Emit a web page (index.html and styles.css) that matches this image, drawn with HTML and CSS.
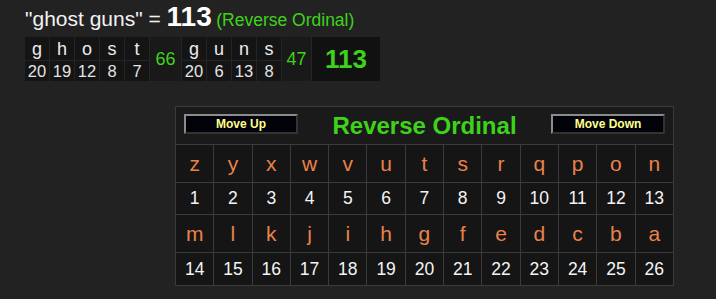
FILE: index.html
```html
<!DOCTYPE html>
<html>
<head>
<meta charset="utf-8">
<link rel="stylesheet" href="styles.css">
</head>
<body>
<div class="page">
  <div class="headline"><span class="phrase">"ghost guns" = </span><span class="total">113</span> <span class="cipher">(Reverse Ordinal)</span></div>
  <div class="breakdown">
    <div class="l">g</div><div class="l">h</div><div class="l">o</div><div class="l">s</div><div class="l">t</div>
    <div class="sub s1">66</div>
    <div class="l">g</div><div class="l">u</div><div class="l">n</div><div class="l">s</div>
    <div class="sub s2">47</div>
    <div class="grand">113</div>
    <div class="n">20</div><div class="n">19</div><div class="n">12</div><div class="n">8</div><div class="n">7</div>
    <div class="n c7">20</div><div class="n">6</div><div class="n">13</div><div class="n">8</div>
  </div>
  <table class="cipher-table">
    <tr class="head">
      <td colspan="13">
        <div class="head-inner">
          <button class="btn">Move Up</button>
          <span class="title">Reverse Ordinal</span>
          <button class="btn">Move Down</button>
        </div>
      </td>
    </tr>
    <tr class="letters"><td>z</td><td>y</td><td>x</td><td>w</td><td>v</td><td>u</td><td>t</td><td>s</td><td>r</td><td>q</td><td>p</td><td>o</td><td>n</td></tr>
    <tr class="nums"><td>1</td><td>2</td><td>3</td><td>4</td><td>5</td><td>6</td><td>7</td><td>8</td><td>9</td><td>10</td><td>11</td><td>12</td><td>13</td></tr>
    <tr class="letters"><td>m</td><td>l</td><td>k</td><td>j</td><td>i</td><td>h</td><td>g</td><td>f</td><td>e</td><td>d</td><td>c</td><td>b</td><td>a</td></tr>
    <tr class="nums last"><td>14</td><td>15</td><td>16</td><td>17</td><td>18</td><td>19</td><td>20</td><td>21</td><td>22</td><td>23</td><td>24</td><td>25</td><td>26</td></tr>
  </table>
</div>
</body>
</html>
```

FILE: styles.css
```css
html, body {
  margin: 0;
  padding: 0;
  background: #222222;
}
body {
  font-family: "Liberation Sans", Arial, sans-serif;
  color: #ececec;
}
.page {
  padding: 0 0 0 25px;
}
.headline {
  height: 37px;
  line-height: 34px;
  white-space: nowrap;
}
.phrase {
  font-size: 21px;
  color: #f2f2f2;
}
.total {
  font-size: 28px;
  font-weight: bold;
  color: #ffffff;
}
.cipher {
  font-size: 17.5px;
  color: #3fd21c;
}
.breakdown {
  display: grid;
  grid-template-columns: 24px 24px 24px 24px 24px 31px 24px 24px 24px 24px 29px 68px;
  grid-template-rows: 23px 20px;
  gap: 1px;
  width: 355px;
  background: #252525;
}
.breakdown > div {
  background: #141414;
  display: flex;
  align-items: center;
  justify-content: center;
}
.breakdown .l {
  font-size: 18px;
  padding-top: 1px;
}
.breakdown .n {
  font-size: 16.5px;
  color: #e4e4e4;
}
.breakdown .sub {
  grid-row: 1 / 3;
  font-size: 18px;
  color: #3fd21c;
  background: #191919;
}
.breakdown .s1 {
  grid-column: 6;
}
.breakdown .s2 {
  grid-column: 11;
}
.breakdown .grand {
  grid-row: 1 / 3;
  grid-column: 12;
  font-size: 26px;
  font-weight: bold;
  color: #3fd21c;
  background: #111111;
}
.breakdown .c7 {
  grid-column: 7;
}
.cipher-table {
  margin: 25px 0 0 150px;
  border-collapse: collapse;
  table-layout: fixed;
  width: 499px;
  background: #151515;
}
.cipher-table td {
  border: 1px solid #3b3b3b;
  text-align: center;
  padding: 0;
}
.head td {
  height: 37px;
  background: #1a1a1a;
}
.head-inner {
  display: flex;
  align-items: center;
  justify-content: space-between;
  padding: 0 8px 3px 8px;
}
.btn {
  width: 114px;
  height: 20px;
  background: #02020a;
  border: 2px solid;
  border-color: #8c8c8c #333333 #333333 #8c8c8c;
  color: #ffff8a;
  font-family: "Liberation Sans", Arial, sans-serif;
  font-weight: bold;
  font-size: 12px;
  padding: 0;
  line-height: 14px;
}
.title {
  color: #3fd21c;
  font-weight: bold;
  font-size: 24px;
  line-height: 26px;
  padding-top: 4px;
}
.letters td {
  height: 37px;
  font-size: 21px;
  color: #e9824c;
}
.nums td {
  height: 31px;
  font-size: 17.5px;
  color: #f4f4f4;
}
.nums.last td {
  height: 32px;
}
```
